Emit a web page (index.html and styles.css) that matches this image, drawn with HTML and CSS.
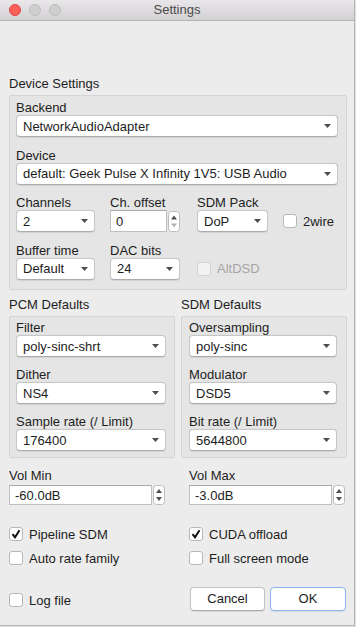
FILE: index.html
```html
<!DOCTYPE html>
<html>
<head>
<meta charset="utf-8">
<link rel="stylesheet" href="styles.css">
</head>
<body>
<div class="window">
  <div class="titlebar">
    <div class="lights"><span class="light red"></span><span class="light"></span><span class="light"></span></div>
    <div class="title">Settings</div>
    <div></div>
  </div>
  <div class="content">
    <div class="gtitle">Device Settings</div>
    <div class="group device">
      <div class="field">
        <div class="lbl">Backend</div>
        <div class="combo"><span>NetworkAudioAdapter</span><svg class="arr" width="7" height="4" viewBox="0 0 7 4"><path d="M0 0H7L3.5 4Z"/></svg></div>
      </div>
      <div class="field">
        <div class="lbl">Device</div>
        <div class="combo"><span>default: Geek Pulse X Infinity 1V5: USB Audio</span><svg class="arr" width="7" height="4" viewBox="0 0 7 4"><path d="M0 0H7L3.5 4Z"/></svg></div>
      </div>
      <div class="devgrid">
        <div class="cell">
          <div class="lbl">Channels</div>
          <div class="combo w79"><span>2</span><svg class="arr" width="7" height="4" viewBox="0 0 7 4"><path d="M0 0H7L3.5 4Z"/></svg></div>
        </div>
        <div class="cell">
          <div class="lbl">Ch. offset</div>
          <div class="spin h22 w70">
            <div class="sfield">0</div>
            <svg class="stepper" width="12" height="21" viewBox="0 0 12 21"><rect x="0.5" y="0.5" width="11" height="20" rx="3" fill="#fff" stroke="#bcbcbc"/><path d="M3 8.5H9L6 4.5Z" fill="#505050"/><path d="M3 12.5H9L6 16.5Z" fill="#b4b4b4"/></svg>
          </div>
        </div>
        <div class="cell">
          <div class="lbl">SDM Pack</div>
          <div class="combo w71"><span>DoP</span><svg class="arr" width="7" height="4" viewBox="0 0 7 4"><path d="M0 0H7L3.5 4Z"/></svg></div>
        </div>
        <div class="cell cbcell">
          <div class="lbl"></div>
          <div class="ctl"><label class="check"><span class="cb"></span><span>2wire</span></label></div>
        </div>
        <div class="cell">
          <div class="lbl">Buffer time</div>
          <div class="combo w79"><span>Default</span><svg class="arr" width="7" height="4" viewBox="0 0 7 4"><path d="M0 0H7L3.5 4Z"/></svg></div>
        </div>
        <div class="cell">
          <div class="lbl">DAC bits</div>
          <div class="combo w70"><span>24</span><svg class="arr" width="7" height="4" viewBox="0 0 7 4"><path d="M0 0H7L3.5 4Z"/></svg></div>
        </div>
        <div class="cell cbcell">
          <div class="lbl"></div>
          <div class="ctl"><label class="check disabled"><span class="cb"></span><span>AltDSD</span></label></div>
        </div>
        <div class="cell"></div>
      </div>
    </div>

    <div class="cols">
      <div class="col">
        <div class="gtitle">PCM Defaults</div>
        <div class="group small">
          <div class="field">
            <div class="lbl">Filter</div>
            <div class="combo"><span>poly-sinc-shrt</span><svg class="arr" width="7" height="4" viewBox="0 0 7 4"><path d="M0 0H7L3.5 4Z"/></svg></div>
          </div>
          <div class="field">
            <div class="lbl">Dither</div>
            <div class="combo"><span>NS4</span><svg class="arr" width="7" height="4" viewBox="0 0 7 4"><path d="M0 0H7L3.5 4Z"/></svg></div>
          </div>
          <div class="field">
            <div class="lbl">Sample rate (/ Limit)</div>
            <div class="combo"><span>176400</span><svg class="arr" width="7" height="4" viewBox="0 0 7 4"><path d="M0 0H7L3.5 4Z"/></svg></div>
          </div>
        </div>
      </div>
      <div class="col">
        <div class="gtitle">SDM Defaults</div>
        <div class="group small sdm">
          <div class="field">
            <div class="lbl">Oversampling</div>
            <div class="combo"><span>poly-sinc</span><svg class="arr" width="7" height="4" viewBox="0 0 7 4"><path d="M0 0H7L3.5 4Z"/></svg></div>
          </div>
          <div class="field">
            <div class="lbl">Modulator</div>
            <div class="combo"><span>DSD5</span><svg class="arr" width="7" height="4" viewBox="0 0 7 4"><path d="M0 0H7L3.5 4Z"/></svg></div>
          </div>
          <div class="field">
            <div class="lbl">Bit rate (/ Limit)</div>
            <div class="combo"><span>5644800</span><svg class="arr" width="7" height="4" viewBox="0 0 7 4"><path d="M0 0H7L3.5 4Z"/></svg></div>
          </div>
        </div>
      </div>
    </div>

    <div class="grid2 vol">
      <div>
        <div class="lbl vlbl">Vol Min</div>
        <div class="spin h20 w156">
          <div class="sfield">-60.0dB</div>
          <svg class="stepper" width="12" height="20" viewBox="0 0 12 20"><rect x="0.5" y="0.5" width="11" height="19" rx="3" fill="#fff" stroke="#bcbcbc"/><path d="M3 8H9L6 4Z" fill="#505050"/><path d="M3 12H9L6 16Z" fill="#505050"/></svg>
        </div>
      </div>
      <div>
        <div class="lbl vlbl">Vol Max</div>
        <div class="spin h20 w156">
          <div class="sfield">-3.0dB</div>
          <svg class="stepper" width="12" height="20" viewBox="0 0 12 20"><rect x="0.5" y="0.5" width="11" height="19" rx="3" fill="#fff" stroke="#bcbcbc"/><path d="M3 8H9L6 4Z" fill="#505050"/><path d="M3 12H9L6 16Z" fill="#505050"/></svg>
        </div>
      </div>
    </div>

    <div class="grid2 checks">
      <label class="check"><span class="cb"><svg width="12" height="12" viewBox="0 0 12 12"><path d="M2.5 6.2L5 9.2L9.5 2.2" fill="none" stroke="#111" stroke-width="2"/></svg></span><span>Pipeline SDM</span></label>
      <label class="check"><span class="cb"><svg width="12" height="12" viewBox="0 0 12 12"><path d="M2.5 6.2L5 9.2L9.5 2.2" fill="none" stroke="#111" stroke-width="2"/></svg></span><span>CUDA offload</span></label>
      <label class="check"><span class="cb"></span><span>Auto rate family</span></label>
      <label class="check"><span class="cb"></span><span>Full screen mode</span></label>
    </div>

    <div class="grid2 bottom">
      <label class="check"><span class="cb"></span><span>Log file</span></label>
      <div class="buttons">
        <div class="btn">Cancel</div>
        <div class="btn ok">OK</div>
      </div>
    </div>
  </div>
</div>
</body>
</html>
```

FILE: styles.css
```css
* { box-sizing: border-box; }
html, body { margin: 0; padding: 0; }
body {
  width: 356px;
  height: 627px;
  overflow: hidden;
  background: #e2e2e2;
  font-family: "Liberation Sans", Arial, sans-serif;
  font-size: 13px;
  color: #1d1d1d;
}
.window {
  width: 355px;
  height: 626px;
  background: #ececec;
  border-right: 1px solid #b3b3b3;
  border-bottom: 1px solid #b3b3b3;
}
.titlebar {
  height: 21px;
  background: linear-gradient(#e9e7e9, #d3d1d3);
  border-bottom: 1px solid #b2b2b2;
  display: grid;
  grid-template-columns: 1fr auto 1fr;
  align-items: center;
}
.lights { display: flex; gap: 8px; padding-left: 9px; }
.light {
  width: 12px; height: 12px; border-radius: 50%;
  background: #d0cfd0; border: 1px solid #bdbcbd;
}
.light.red { background: #fc5f57; border-color: #de4641; }
.title { color: #4b4b4b; line-height: 20px; }

.content { padding: 55px 7px 0 9px; }
.gtitle { line-height: 15px; height: 15px; margin-bottom: 4px; }
.group {
  background: #e5e5e5;
  border: 1px solid #d4d4d4;
  border-radius: 2px;
  padding: 4px 8px 9.5px 6px;
}
.group.small { padding: 3px 8px 6px 6px; }
.group.sdm { padding: 3px 9px 6px 7px; }
.lbl { line-height: 15px; height: 15px; white-space: nowrap; }
.field + .field { margin-top: 10.5px; }
.group.small .field + .field { margin-top: 10px; }

.combo {
  height: 22px;
  background: #fff;
  border: 1px solid #c6c6c6;
  border-bottom-color: #acacac;
  border-radius: 4px;
  display: flex;
  align-items: center;
  padding: 0 6px 0 6px;
  white-space: nowrap;
  box-shadow: 0 0.5px 1px rgba(0,0,0,0.08);
}
.combo span { flex: 1; overflow: hidden; }
.combo .arr { flex: none; fill: #4e4e4e; margin-left: 4px; }
.w79 { width: 79px; }
.w70 { width: 70px; }
.w71 { width: 71px; }
.w156 { width: 156px; }

.devgrid {
  margin-top: 10.5px;
  display: grid;
  grid-template-columns: 94px 87px 86px 1fr;
  row-gap: 10.5px;
}
.cbcell .ctl { height: 22px; display: flex; align-items: center; }

.spin { display: flex; align-items: center; gap: 1px; }
.spin.h22 { height: 22px; }
.spin.h20 { height: 20px; }
.sfield {
  flex: 1;
  height: 100%;
  background: #fff;
  border: 1px solid #c0c0c0;
  border-top-color: #a9a9a9;
  display: flex;
  align-items: center;
  padding-left: 5px;
}
.stepper { flex: none; }

.cols {
  margin-top: 7px;
  display: grid;
  grid-template-columns: 166px 166px;
  column-gap: 6px;
}

.grid2 {
  display: grid;
  grid-template-columns: 180px 1fr;
}
.vol { margin-top: 10px; }
.vlbl { margin-bottom: 2px; }

.check { display: flex; align-items: center; gap: 6px; height: 16px; white-space: nowrap; }
.cb {
  width: 14px; height: 14px;
  background: #fff;
  border: 1px solid #b8b8b8;
  border-radius: 3px;
  display: flex; align-items: center; justify-content: center;
  flex: none;
}
.check.disabled { color: #a5a5a5; }
.check.disabled .cb { background: #f2f2f2; border-color: #d3d3d3; }

.checks { margin-top: 21px; row-gap: 8px; }
.bottom { margin-top: 21px; align-items: center; height: 24px; }
.bottom .check { margin-top: 2px; }
.buttons { display: flex; gap: 5px; margin-left: 1px; }
.btn {
  width: 75px;
  height: 24px;
  line-height: 22px;
  text-align: center;
  background: #fff;
  border: 1px solid #c3c3c3;
  border-bottom-color: #a9a9a9;
  border-radius: 4px;
  box-shadow: 0 0.5px 1px rgba(0,0,0,0.08);
}
.btn.ok { width: 76px; border-color: #8db5ee; }
```
